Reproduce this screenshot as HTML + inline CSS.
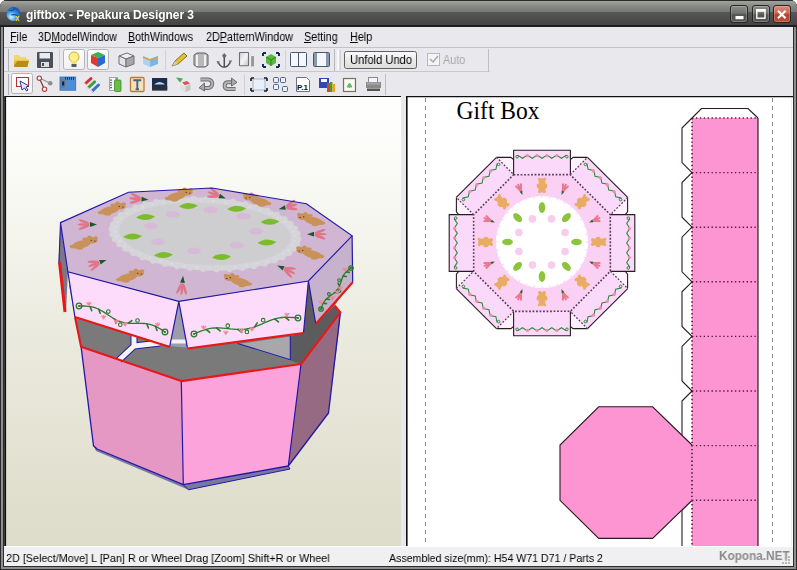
<!DOCTYPE html>
<html><head><meta charset="utf-8">
<style>
*{margin:0;padding:0;box-sizing:border-box}
html,body{width:797px;height:570px;overflow:hidden;background:#fff;font-family:"Liberation Sans",sans-serif}
.abs{position:absolute}
#frame{left:0;top:0;width:797px;height:570px;background:#3a3a3a;border-radius:7px 7px 0 0;box-shadow:inset 1px 0 0 #2a2a2a,inset -1px 0 0 #2a2a2a,inset 0 -1px 0 #2a2a2a}
#frin{left:1px;top:20px;width:795px;height:549px;border:2px solid #8e8e8e;border-top:none;box-shadow:inset 0 0 0 1px #2c2c2c}
#title{left:0;top:0;width:797px;height:27px;border-radius:7px 7px 0 0;background:linear-gradient(#2a2a2a 0px,#2a2a2a 1px,#a2a4a0 1px,#969894 3px,#848682 7px,#767874 12.5px,#575757 12.5px,#4e4e4e 18px,#444444 25px,#1e1e1e 25px,#1e1e1e 27px)}
#ttext{will-change:transform;padding-right:3px;left:26px;top:8px;color:#fff;font-weight:bold;font-size:12px;letter-spacing:-0.05px;white-space:nowrap}
.wb{top:5px;width:18px;height:18px;border:1px solid #262626;border-radius:3px;background:linear-gradient(#8c8e8a,#70726e 45%,#525252 55%,#5a5a5a);box-shadow:inset 0 0 0 1px rgba(255,255,255,.22)}
#menubar{left:4px;top:27px;width:789px;height:20px;background:#e9e8ec}
.mi{will-change:transform;padding-right:3px;top:3px;font-size:12px;color:#000;transform-origin:0 0;white-space:nowrap}
.u{text-decoration:underline}
#tb1{left:4px;top:47px;width:789px;height:25px;background:#e9e8ec;border-top:1px solid #c4c4c8}
#tb2{left:4px;top:72px;width:789px;height:24px;background:#e9e8ec}
#view3d{left:5px;top:96px;width:396px;height:450px;background:linear-gradient(#ffffff 0%,#f7f7f2 20%,#e9e8dc 55%,#dddcc9 100%);border-top:1px solid #1a1a1a}
#split{left:401px;top:96px;width:5px;height:450px;background:#e9e8ec}
#view2d{left:406px;top:96px;width:386px;height:450px;background:#fff;border-top:2px solid #111;border-left:2px solid #111}
#status{left:4px;top:546px;width:789px;height:20px;background:#f0f0f2;border-top:1px solid #fff}
.st{will-change:transform;padding-right:3px;top:551.5px;font-size:11.5px;color:#000;transform-origin:0 0;white-space:nowrap}
</style></head><body>
<div id="frame" class="abs"></div>
<div id="frin" class="abs"></div>
<div id="title" class="abs"></div>
<div id="ttext" class="abs">giftbox - Pepakura Designer 3</div>
<div class="abs wb" style="left:730px"></div>
<div class="abs wb" style="left:751.5px"></div>
<div class="abs wb" style="left:772.5px;background:linear-gradient(#dc8a7a,#cc6650 45%,#b8402a 55%,#c05038)"></div>
<svg class="abs" style="left:725px;top:0" width="72" height="27" viewBox="725 0 72 27"><rect x="735.5" y="16" width="8" height="3.2" fill="#fff"/><rect x="756.8" y="9.8" width="8.2" height="8.4" fill="none" stroke="#fff" stroke-width="1.4"/><rect x="756.2" y="9.2" width="9.4" height="2.6" fill="#fff"/><path d="M778 10.8 L785.6 18.2 M785.6 10.8 L778 18.2" stroke="#fff" stroke-width="2.2"/></svg>
<div id="menubar" class="abs"></div>
<div class="abs mi" style="left:10px;top:29.5px;transform:scaleX(.9)"><span class="u">F</span>ile</div>
<div class="abs mi" style="left:38px;top:29.5px;transform:scaleX(.87)">3D<span class="u">M</span>odelWindow</div>
<div class="abs mi" style="left:128px;top:29.5px;transform:scaleX(.885)"><span class="u">B</span>othWindows</div>
<div class="abs mi" style="left:206px;top:29.5px;transform:scaleX(.9)">2D<span class="u">P</span>atternWindow</div>
<div class="abs mi" style="left:304px;top:29.5px;transform:scaleX(.9)"><span class="u">S</span>etting</div>
<div class="abs mi" style="left:350px;top:29.5px;transform:scaleX(.9)"><span class="u">H</span>elp</div>
<div id="tb1" class="abs"></div>
<div id="tb2" class="abs"></div>
<svg class="abs" style="left:0;top:46px" width="500" height="51" viewBox="0 46 500 51">
<defs>
<linearGradient id="btnp" x1="0" y1="0" x2="0" y2="1"><stop offset="0" stop-color="#fdfdfd"/><stop offset="1" stop-color="#f1f1f1"/></linearGradient>
<linearGradient id="folder" x1="0" y1="0" x2="0" y2="1"><stop offset="0" stop-color="#f4d860"/><stop offset="1" stop-color="#c8901a"/></linearGradient>
<linearGradient id="gbtn" x1="0" y1="0" x2="0" y2="1"><stop offset="0" stop-color="#fafafa"/><stop offset="1" stop-color="#dcdcdc"/></linearGradient>
</defs>
<!-- toolbar band lines -->
<line x1="8.5" y1="49" x2="8.5" y2="71" stroke="#b0b0b4"/>
<line x1="4" y1="71.5" x2="490" y2="71.5" stroke="#c8c8cc"/>
<line x1="8.5" y1="74" x2="8.5" y2="95" stroke="#b0b0b4"/>
<line x1="488.5" y1="49" x2="488.5" y2="71" stroke="#c0c0c4"/>
<line x1="385.5" y1="74" x2="385.5" y2="95" stroke="#c0c0c4"/>
<!-- folder -->
<path d="M14 55 h5 l1.5 2 h6 v2 H14z" fill="#f0d870"/>
<path d="M14 59 h15 l-1.5 8 H14z" fill="url(#folder)"/>
<path d="M17 61 h12 l-2 6 H14z" fill="#b88a20"/>
<!-- save -->
<rect x="37" y="52" width="16" height="16" rx="1" fill="#4a4f58"/>
<rect x="39.5" y="53" width="10.5" height="5.5" fill="#e8ecf2"/>
<rect x="41" y="62" width="8" height="5" fill="#dcdcdc"/>
<rect x="42" y="63" width="2" height="3" fill="#4a4f58"/>
<line x1="59.5" y1="49" x2="59.5" y2="71" stroke="#d0d0d4"/>
<!-- pressed buttons -->
<rect x="63.5" y="49.5" width="21" height="20" rx="2" fill="url(#btnp)" stroke="#b4b4b8"/>
<rect x="87.5" y="49.5" width="21" height="20" rx="2" fill="url(#btnp)" stroke="#b4b4b8"/>
<!-- bulb -->
<circle cx="74" cy="57" r="5" fill="#fbf08a" stroke="#c8b040" stroke-width="1"/>
<rect x="71.5" y="61" width="5" height="4" fill="#f4e070"/>
<rect x="71.5" y="64" width="5" height="3" fill="#5a5a5a"/>
<!-- color cube -->
<path d="M91 55 l7-3 l7 3 l-7 3z" fill="#3cb04a"/>
<path d="M91 55 v8 l7 4 v-9z" fill="#e03a2a"/>
<path d="M105 55 v8 l-7 4 v-9z" fill="#2a6ad0"/>
<!-- gray cube -->
<path d="M119 56 l8-3 l7 3 l-8 3z" fill="#f0f0f0" stroke="#707070" stroke-width="1"/>
<path d="M119 56 v8 l7 3 v-8z" fill="#e4e4e4" stroke="#707070" stroke-width="1"/>
<path d="M134 56 v8 l-8 3 v-8z" fill="#a8a8a8" stroke="#707070" stroke-width="1"/>
<!-- blue cube -->
<path d="M143 56 l8-3 l7 3 l-8 3z" fill="#d8ecfa"/>
<path d="M143 56 v8 l7 3 v-8z" fill="#a8d4f2"/>
<path d="M158 56 v8 l-8 3 v-8z" fill="#78b8e8"/>
<path d="M143 57 l7 3 l8-3" fill="none" stroke="#e89a40" stroke-width="1.5"/>
<line x1="165.5" y1="50" x2="165.5" y2="70" stroke="#d0d0d4"/>
<!-- pencil -->
<path d="M172 66 l3-5 l9-8 l3 3 l-9 8z" fill="#e0c030" stroke="#8a7020" stroke-width="1"/>
<path d="M172 66 l3-5 l3 3z" fill="#c8c8c8"/>
<!-- cylinder -->
<path d="M194 55 l3-2 h8 l3 2 v10 l-3 2 h-8 l-3-2z" fill="#b8b8b8" stroke="#606060"/>
<path d="M197 55 v11 M205 55 v11" stroke="#f0f0f0" stroke-width="2"/>
<!-- anchor -->
<path d="M224.3 53 L226.6 55.8 L224.3 58.6 L222 55.8z" fill="#6a6a6a"/>
<path d="M224.3 57 V67 M218.5 63 Q221 67.5 224.3 67 Q227.5 67.5 230 62.5" fill="none" stroke="#505050" stroke-width="1.5"/>
<path d="M216.5 61 l3.5 0.5 l-2 3z M232 60.3 l-3.5 0.5 l2 3z" fill="#707070"/>
<!-- half rect -->
<defs><linearGradient id="hr" x1="0" y1="0" x2="1" y2="1"><stop offset="0" stop-color="#d0d0d0"/><stop offset="0.5" stop-color="#f4f4f4"/><stop offset="1" stop-color="#c4c4c4"/></linearGradient></defs>
<rect x="239.5" y="52.5" width="9" height="13.3" rx="0.5" fill="url(#hr)" stroke="#6e6e6e" stroke-width="1.1"/>
<rect x="251.2" y="56.1" width="2.7" height="10.3" fill="#929292"/>
<!-- green cube selection -->
<path d="M263 53 h3 M263 53 v3 M279 53 h-3 M279 53 v3 M263 67 h3 M263 67 v-3 M279 67 h-3 M279 67 v-3" stroke="#1a2a60" stroke-width="2"/>
<path d="M266 57 l5-3 l5 3 v6 l-5 3 l-5-3z" fill="#5ab840"/>
<path d="M266 57 l5 3 l5-3 M271 60 v6" stroke="#2c8020" fill="none"/>
<line x1="285.5" y1="50" x2="285.5" y2="70" stroke="#d0d0d4"/>
<!-- window icons -->
<rect x="290.5" y="52.5" width="16" height="14" rx="1" fill="#f4f8fc" stroke="#4a5670"/>
<line x1="298.5" y1="53" x2="298.5" y2="66" stroke="#4a5670"/>
<rect x="313.5" y="52.5" width="16" height="14" rx="1" fill="#f4f8fc" stroke="#4a5670"/>
<rect x="314" y="53" width="3" height="13" fill="#8898b0"/>
<rect x="326" y="53" width="3" height="13" fill="#8898b0"/>
<line x1="334.5" y1="49" x2="334.5" y2="71" stroke="#b8b8bc"/><rect x="337" y="50" width="3" height="20" fill="#f8f8fa"/><line x1="340" y1="50" x2="340" y2="70" stroke="#c0c0c4"/>
<!-- unfold undo button -->
<rect x="344.5" y="51.5" width="72" height="17" rx="2" fill="url(#gbtn)" stroke="#606060"/>
<!-- auto checkbox -->
<rect x="427.5" y="53.5" width="12" height="12" fill="#f4f4f4" stroke="#b8b8b8"/>
<path d="M430 59 l3 3 l5-6" fill="none" stroke="#a8a8a8" stroke-width="1.5"/>
<!-- toolbar 2 -->
<rect x="11.5" y="73.5" width="21" height="20" rx="2" fill="url(#btnp)" stroke="#b4b4b8"/>
<rect x="16.5" y="77.5" width="12" height="9" fill="#fff" stroke="#b03030"/>
<path d="M20 81 l9 5 l-3 1 l2 3 l-1.5 1 l-2-3 l-2.5 2z" fill="#dfe8f8" stroke="#2a3a80" stroke-width="1"/>
<!-- nodes -->
<path d="M39.3 78 L44.5 89.4" stroke="#6a3a3a" stroke-width="1.2"/>
<path d="M39.3 78 L50.2 83.2" stroke="#909090" stroke-width="1.2"/>
<circle cx="39.3" cy="78.2" r="2.2" fill="#f4f4f4" stroke="#b04040" stroke-width="1.1"/>
<circle cx="44.5" cy="89.2" r="2.2" fill="#f4f4f4" stroke="#b04040" stroke-width="1.1"/>
<circle cx="50.2" cy="83.3" r="2.3" fill="#8e8e8e"/>
<!-- blue zipper -->
<rect x="60" y="77" width="15.7" height="13.2" fill="#4e8ed6" stroke="#3a6aa8" stroke-width="0.8"/>
<path d="M65 78.5 h10" stroke="#1a2a50" stroke-width="2.4" stroke-dasharray="1 1"/>
<rect x="61" y="79" width="4.5" height="9" fill="#707a88"/>
<rect x="62.2" y="81.5" width="2" height="4" fill="#1a1a1a"/>
<!-- pencils -->
<path d="M85.5 83.5 L91 78.5 M88.5 87.5 L94.6 81.8 M92.3 90.8 L98.5 85" stroke-width="3" fill="none" stroke-linecap="round"/>
<path d="M85.5 83.5 L91 78.5" stroke="#d83030" stroke-width="3" stroke-linecap="round"/>
<path d="M88.5 87.5 L94.6 81.8" stroke="#3aa040" stroke-width="3" stroke-linecap="round"/>
<path d="M92.3 90.8 L98.5 85" stroke="#3a70d0" stroke-width="3" stroke-linecap="round"/>
<path d="M84 85 l1.5-1.5 M87 89 l1.5-1.5 M90.8 92.3 l1.5-1.5" stroke="#e8e0d8" stroke-width="2"/>
<!-- doc green -->
<rect x="109.5" y="77.5" width="8" height="13" fill="#f4f6fa" stroke="#a0a8b8"/>
<path d="M111 79.5 v10" stroke="#303840" stroke-width="1.4" stroke-dasharray="1.2 1.3"/>
<rect x="114.5" y="80" width="6.5" height="11.5" rx="1" fill="#6cbc48" stroke="#3a8a2a" stroke-width="0.8"/>
<rect x="115.5" y="78" width="2" height="3" fill="#5aa040"/>
<!-- T -->
<rect x="130.5" y="77.5" width="13.5" height="14" rx="1" fill="#f6e2b8" stroke="#c07838" stroke-width="1.3"/>
<path d="M133.3 80.3 h8 M137.3 80.3 v9 M135.6 89.3 h3.4" stroke="#4a6488" stroke-width="1.9"/>
<!-- dark blue -->
<rect x="152" y="78" width="15.2" height="12.4" fill="#1c2c4c"/>
<path d="M154 84.5 q5.6-5 11.2 0z" fill="#b8dcf4"/>
<rect x="152" y="86" width="15.2" height="4.4" fill="#2a3040"/>
<!-- red green cube -->
<path d="M180.5 84 l5-2.2 l5 2.2 l-5 2.2z" fill="#f4f0f0"/>
<path d="M180.5 84 v6 l5 2.2 v-6z" fill="#e2e2e2"/>
<path d="M190.5 84 v6 l-5 2.2 v-6z" fill="#c4c4c4"/>
<path d="M176 77.5 l7 1 l-3 4z" fill="#40b050"/>
<path d="M182 82.5 l5 -1.5 l3 2.5 l-5 1.8z" fill="#e05050"/>
<!-- undo redo -->
<path d="M200.5 79.5 H208 A4.2 4.2 0 0 1 208 88 H203.5" fill="none" stroke="#6e6e6e" stroke-width="4"/>
<path d="M200.5 79.5 H208 A4.2 4.2 0 0 1 208 88 H203.5" fill="none" stroke="#b4b4b4" stroke-width="2"/>
<path d="M204.5 83 L199 87.8 L204.5 91z" fill="#a8a8a8" stroke="#6e6e6e" stroke-width="1"/>
<path d="M235.5 89 H227.5 A3.4 3.4 0 0 1 227.5 82.3 H232" fill="none" stroke="#6e6e6e" stroke-width="4"/>
<path d="M235.5 89 H227.5 A3.4 3.4 0 0 1 227.5 82.3 H232" fill="none" stroke="#b4b4b4" stroke-width="2"/>
<path d="M231.5 78 L237 82.3 L231.5 86z" fill="#a8a8a8" stroke="#6e6e6e" stroke-width="1"/>
<line x1="244.5" y1="74" x2="244.5" y2="95" stroke="#d0d0d4"/>
<!-- select square -->
<rect x="253" y="79" width="12" height="11" fill="#e8f0fa" stroke="#a8b8d0"/>
<path d="M251 78 h3 M251 78 v3 M267 78 h-3 M267 78 v3 M251 91 h3 M251 91 v-3 M267 91 h-3 M267 91 v-3" stroke="#1a1a30" stroke-width="1.6"/>
<!-- 4 squares -->
<rect x="273.5" y="77.5" width="5" height="5" rx="1" fill="#e8f0f8" stroke="#506080"/>
<rect x="280.5" y="77.5" width="5" height="5" rx="1" fill="#e8f0f8" stroke="#506080"/>
<rect x="273.5" y="84.5" width="5" height="5" rx="1" fill="#e8f0f8" stroke="#506080"/>
<rect x="282.5" y="86.5" width="5" height="5" rx="1" fill="#e8f0f8" stroke="#506080"/>
<!-- P.1 -->
<path d="M296.5 77.5 h10 l3 3 v11 h-13z" fill="#fff" stroke="#707080"/>
<text x="297" y="90" font-family="Liberation Sans" font-weight="bold" font-size="8" fill="#111">P.1</text>
<!-- color blocks -->
<rect x="319" y="78" width="10" height="10" fill="#2a4ab0"/>
<rect x="321" y="79" width="6" height="3" fill="#fff"/>
<rect x="327" y="83" width="3" height="9" fill="#e04020"/>
<rect x="330" y="82" width="2.5" height="10" fill="#40a040"/>
<rect x="332.5" y="84" width="2.5" height="8" fill="#f0a020"/>
<!-- doc icon -->
<rect x="343.5" y="78.5" width="12" height="13" fill="#f4f4ec" stroke="#7a7260" stroke-width="1.2"/>
<rect x="345" y="80" width="9" height="10" fill="#fafaf4"/>
<path d="M347 87 l2.5-4 l2.5 4z M349.5 85 v3" fill="#60c060" stroke="#60c060"/>
<!-- printer -->
<rect x="368.5" y="77.5" width="9" height="6" fill="#f4f6fa" stroke="#8a8a8a"/>
<path d="M366 82 h15 v6 h-15z" fill="#8a8a8a"/>
<rect x="367" y="82.5" width="13" height="2" fill="#a8a8a8"/>
<rect x="367" y="88.5" width="13" height="2.5" fill="#555"/>
</svg>
<div class="abs" style="will-change:transform;padding-right:3px;left:350px;top:53px;font-size:12px;transform:scaleX(.93);transform-origin:0 0;white-space:nowrap;color:#000">Unfold Undo</div>
<div class="abs" style="will-change:transform;padding-right:3px;left:443px;top:53px;font-size:12px;transform:scaleX(.9);transform-origin:0 0;white-space:nowrap;color:#a8a8a8">Auto</div>

<div id="view3d" class="abs"></div>
<!--V3D-->
<svg class="abs" style="left:5px;top:96px" width="396" height="450" viewBox="5 96 396 450">
<defs><linearGradient id="bg3" x1="0" y1="0" x2="0" y2="1"><stop offset="0" stop-color="#ffffff"/><stop offset="0.22" stop-color="#f8f8f3"/><stop offset="0.55" stop-color="#eae9dd"/><stop offset="1" stop-color="#dddcca"/></linearGradient></defs>
<rect x="5" y="97" width="396" height="449" fill="url(#bg3)"/><line x1="5" y1="96.5" x2="401" y2="96.5" stroke="#101010" stroke-width="1.2"/>
<polygon points="93.5,445.7 97,449 183.3,484.7 288.3,466 290,469 188.4,489.8 96,451" fill="#7a78a0" stroke="none" stroke-width="1" />
<polygon points="81.1,346.8 181.3,381.1 183.3,484.7 97,449 93.5,445.7" fill="#e598c4" stroke="none" stroke-width="1" />
<polygon points="181.3,381.1 301,364 288.3,466 183.3,484.7" fill="#fca3dc" stroke="none" stroke-width="1" />
<polygon points="301,364 340.4,312.4 339,330 328.5,413 288.3,466" fill="#976a84" stroke="none" stroke-width="1" />
<polyline points="81.1,346.8 93.5,445.7 97,449 183.3,484.7 288.3,466 328.5,413 340.4,312.4" fill="none" stroke="#2218a8" stroke-width="1.3" stroke-linejoin="round" />
<polyline points="181.3,381.1 183.3,484.7" fill="none" stroke="#2218a8" stroke-width="1.2" stroke-linejoin="round" />
<polyline points="301,364 288.3,466" fill="none" stroke="#2218a8" stroke-width="1.2" stroke-linejoin="round" />
<polyline points="183.3,484.7 188.4,489.8 290,469 288.3,466" fill="none" stroke="#2218a8" stroke-width="1" stroke-linejoin="round" />
<polygon points="69,285 75,317 81.1,346.8 181.3,381.1 301,364 340.4,312.4 334.8,305.6 352,280 308,281" fill="#7b7a7b" stroke="none" stroke-width="1" />
<polygon points="238,344 290.5,360.4 290.5,336.6" fill="#a8a8ac" stroke="none" stroke-width="1" />
<polygon points="290.5,336.6 303.5,332.7 308.4,281 315.8,324 334.8,305.6 340.4,312.4 301,364 290.5,360.4" fill="#5c5c5e" stroke="none" stroke-width="1" />
<polyline points="237.6,343.5 290.3,359.7 290.3,336" fill="none" stroke="#2218a8" stroke-width="1.1" stroke-linejoin="round" />
<polyline points="119,360 134,346 134,336" fill="none" stroke="#2218a8" stroke-width="7" stroke-linejoin="round" />
<polyline points="134,346 160,343" fill="none" stroke="#2218a8" stroke-width="7" stroke-linejoin="round" />
<polyline points="119,360 134,346 134,336" fill="none" stroke="#f4f4f6" stroke-width="5" stroke-linejoin="round" />
<polyline points="134,346 160,343" fill="none" stroke="#f4f4f6" stroke-width="5" stroke-linejoin="round" />
<polyline points="75,317 81.1,346.8 181.3,381.1 301,364 340.4,312.4 334.8,305.6" fill="none" stroke="#e81818" stroke-width="2.1" stroke-linejoin="round" />
<polygon points="60.5,222.6 67.9,271.8 66,313 58.5,262" fill="#7c7688" stroke="none" stroke-width="1" />
<polyline points="60.5,222.6 59,262" fill="none" stroke="#2218a8" stroke-width="1.1" stroke-linejoin="round" />
<polyline points="59.5,262 65,312" fill="none" stroke="#e81818" stroke-width="3" stroke-linejoin="round" />
<polygon points="67.9,271.8 178.8,301.4 169.8,346 74.9,317" fill="#fcdcfa" stroke="none" stroke-width="1" />
<polygon points="178.8,301.4 169.8,346 187.4,347.7" fill="#9c9cae" stroke="none" stroke-width="1" />
<polygon points="171,339.5 186.5,339.5 187,343.5 170.5,343.5" fill="#f0f0ff" stroke="none" stroke-width="1" />
<polygon points="178.8,301.4 308.4,281 303.5,332.7 187.6,347.9" fill="#fcdcfa" stroke="none" stroke-width="1" />
<polygon points="308.4,281 352.1,235.8 352.7,282.3 315.8,324" fill="#c6b2cc" stroke="none" stroke-width="1" />
<polyline points="67.9,271.8 74.9,317" fill="none" stroke="#2218a8" stroke-width="1.2" stroke-linejoin="round" />
<polyline points="169.8,346 178.8,301.4 187.4,347.7" fill="none" stroke="#2218a8" stroke-width="1.2" stroke-linejoin="round" />
<polyline points="308.4,281 303.5,332.7" fill="none" stroke="#2218a8" stroke-width="1.2" stroke-linejoin="round" />
<polyline points="308.4,281 315.8,324" fill="none" stroke="#2218a8" stroke-width="1.2" stroke-linejoin="round" />
<polyline points="352.1,235.8 352.7,282.3" fill="none" stroke="#2218a8" stroke-width="1.2" stroke-linejoin="round" />
<polyline points="74.9,317 169.8,347" fill="none" stroke="#e81818" stroke-width="2.1" stroke-linejoin="round" />
<polyline points="187.6,348.5 303.5,333" fill="none" stroke="#e81818" stroke-width="2.1" stroke-linejoin="round" />
<polyline points="315.8,324 352.7,282.3" fill="none" stroke="#e81818" stroke-width="2.1" stroke-linejoin="round" />
<path d="M79.0 306.0 L81.4 306.0 L83.7 306.0 L86.0 306.1 L88.3 306.3 L90.6 306.6 L92.8 307.1 L94.9 307.7 L97.0 308.5 L99.1 309.4 L101.1 310.5 L103.1 311.6 L105.1 312.9 L107.0 314.2 L109.0 315.5 L110.9 316.8 L112.9 318.1 L114.9 319.2 L116.9 320.3 L119.0 321.1 L121.1 321.9 L123.3 322.4 L125.5 322.9 L127.8 323.1 L130.1 323.3 L132.4 323.3 L134.8 323.3 L137.1 323.3 L139.5 323.3 L141.8 323.3 L144.1 323.5 L146.4 323.7 L148.6 324.1 L150.8 324.6 L153.0 325.3 L155.1 326.1 L157.1 327.1 L159.1 328.2 L161.1 329.4 L163.1 330.7 L165.0 332.0 " fill="none" stroke="#2c7a2c" stroke-width="1.3"/>
<circle cx="79.0" cy="306.0" r="2.8" fill="none" stroke="#2c7a2c" stroke-width="1.3"/><circle cx="79.0" cy="306.0" r="1.1" fill="#2c7a2c"/>
<circle cx="165.0" cy="332.0" r="2.8" fill="none" stroke="#2c7a2c" stroke-width="1.3"/><circle cx="165.0" cy="332.0" r="1.1" fill="#2c7a2c"/>
<circle cx="108.3" cy="311.6" r="1.8" fill="none" stroke="#2c7a2c" stroke-width="1.1"/>
<circle cx="120.3" cy="324.7" r="1.8" fill="none" stroke="#2c7a2c" stroke-width="1.1"/>
<circle cx="137.5" cy="320.5" r="1.8" fill="none" stroke="#2c7a2c" stroke-width="1.1"/>
<path d="M90.1 306.5 L91.7 310.7" stroke="#2c7a2c" stroke-width="1.6" stroke-linecap="round"/>
<path d="M98.7 309.2 L100.2 313.3" stroke="#2c7a2c" stroke-width="1.6" stroke-linecap="round"/>
<path d="M114.5 319.0 L116.1 323.1" stroke="#2c7a2c" stroke-width="1.6" stroke-linecap="round"/>
<path d="M128.2 323.2 L131.8 320.6" stroke="#2c7a2c" stroke-width="1.6" stroke-linecap="round"/>
<path d="M146.8 323.8 L148.4 327.9" stroke="#2c7a2c" stroke-width="1.6" stroke-linecap="round"/>
<path d="M155.5 326.3 L157.0 330.4" stroke="#2c7a2c" stroke-width="1.6" stroke-linecap="round"/>
<g transform="translate(88.9 304.3)"><path d="M-2.2 -2 L0 1 L2.2 -2 M0 -2.5 L0 1" stroke="#f0889a" stroke-width="1.3" fill="none"/></g>
<g transform="translate(116.4 322.0)"><path d="M-2.2 -2 L0 1 L2.2 -2 M0 -2.5 L0 1" stroke="#f0889a" stroke-width="1.3" fill="none"/></g>
<g transform="translate(125.0 324.6)"><path d="M-2.2 -2 L0 1 L2.2 -2 M0 -2.5 L0 1" stroke="#f0889a" stroke-width="1.3" fill="none"/></g>
<g transform="translate(157.7 325.1)"><path d="M-2.2 -2 L0 1 L2.2 -2 M0 -2.5 L0 1" stroke="#f0889a" stroke-width="1.3" fill="none"/></g>
<g transform="translate(103.6 317.6)"><path d="M-2.2 -2 L0 1 L2.2 -2 M0 -2.5 L0 1" stroke="#f0889a" stroke-width="1.3" fill="none"/></g>
<path d="M194.0 334.0 L196.5 332.9 L199.0 331.9 L201.5 330.9 L204.0 330.0 L206.6 329.3 L209.1 328.7 L211.7 328.2 L214.4 328.0 L217.0 327.9 L219.7 327.9 L222.4 328.1 L225.1 328.3 L227.8 328.6 L230.5 328.9 L233.2 329.1 L235.9 329.3 L238.5 329.5 L241.2 329.4 L243.8 329.3 L246.5 329.0 L249.0 328.5 L251.6 327.8 L254.1 327.1 L256.7 326.1 L259.2 325.1 L261.7 324.1 L264.2 323.0 L266.7 321.9 L269.2 320.9 L271.7 319.9 L274.2 319.1 L276.8 318.4 L279.3 317.8 L281.9 317.5 L284.6 317.3 L287.2 317.2 L289.9 317.3 L292.6 317.5 L295.3 317.7 L298.0 318.0 " fill="none" stroke="#2c7a2c" stroke-width="1.3"/>
<circle cx="194.0" cy="334.0" r="2.8" fill="none" stroke="#2c7a2c" stroke-width="1.3"/><circle cx="194.0" cy="334.0" r="1.1" fill="#2c7a2c"/>
<circle cx="298.0" cy="318.0" r="2.8" fill="none" stroke="#2c7a2c" stroke-width="1.3"/><circle cx="298.0" cy="318.0" r="1.1" fill="#2c7a2c"/>
<circle cx="227.8" cy="325.7" r="1.8" fill="none" stroke="#2c7a2c" stroke-width="1.1"/>
<circle cx="246.9" cy="331.9" r="1.8" fill="none" stroke="#2c7a2c" stroke-width="1.1"/>
<circle cx="263.2" cy="320.2" r="1.8" fill="none" stroke="#2c7a2c" stroke-width="1.1"/>
<path d="M206.1 329.4 L209.7 332.4" stroke="#2c7a2c" stroke-width="1.6" stroke-linecap="round"/>
<path d="M216.5 327.9 L220.1 330.9" stroke="#2c7a2c" stroke-width="1.6" stroke-linecap="round"/>
<path d="M238.0 329.4 L241.7 332.4" stroke="#2c7a2c" stroke-width="1.6" stroke-linecap="round"/>
<path d="M254.7 326.9 L257.2 322.9" stroke="#2c7a2c" stroke-width="1.6" stroke-linecap="round"/>
<path d="M274.7 318.9 L278.4 321.9" stroke="#2c7a2c" stroke-width="1.6" stroke-linecap="round"/>
<path d="M285.1 317.2 L288.8 320.2" stroke="#2c7a2c" stroke-width="1.6" stroke-linecap="round"/>
<g transform="translate(203.7 328.0)"><path d="M-2.2 -2 L0 1 L2.2 -2 M0 -2.5 L0 1" stroke="#f0889a" stroke-width="1.3" fill="none"/></g>
<g transform="translate(241.5 331.2)"><path d="M-2.2 -2 L0 1 L2.2 -2 M0 -2.5 L0 1" stroke="#f0889a" stroke-width="1.3" fill="none"/></g>
<g transform="translate(251.9 329.6)"><path d="M-2.2 -2 L0 1 L2.2 -2 M0 -2.5 L0 1" stroke="#f0889a" stroke-width="1.3" fill="none"/></g>
<g transform="translate(286.9 315.2)"><path d="M-2.2 -2 L0 1 L2.2 -2 M0 -2.5 L0 1" stroke="#f0889a" stroke-width="1.3" fill="none"/></g>
<g transform="translate(225.8 333.2)"><path d="M-2.2 -2 L0 1 L2.2 -2 M0 -2.5 L0 1" stroke="#f0889a" stroke-width="1.3" fill="none"/></g>
<path d="M321.0 309.0 L321.4 307.7 L321.9 306.5 L322.3 305.3 L322.9 304.1 L323.4 302.9 L324.1 301.8 L324.8 300.8 L325.6 299.8 L326.5 298.9 L327.5 298.0 L328.5 297.2 L329.6 296.4 L330.6 295.6 L331.7 294.8 L332.8 294.0 L333.8 293.2 L334.8 292.4 L335.8 291.5 L336.6 290.5 L337.4 289.5 L338.1 288.5 L338.8 287.4 L339.3 286.2 L339.8 285.0 L340.3 283.8 L340.7 282.5 L341.1 281.2 L341.6 280.0 L342.0 278.7 L342.5 277.5 L343.0 276.3 L343.6 275.2 L344.3 274.1 L345.1 273.1 L345.9 272.2 L346.9 271.3 L347.8 270.4 L348.9 269.6 L349.9 268.8 L351.0 268.0 " fill="none" stroke="#2c7a2c" stroke-width="1.3"/>
<circle cx="321.0" cy="309.0" r="2.2" fill="none" stroke="#2c7a2c" stroke-width="1.3"/><circle cx="321.0" cy="309.0" r="1.1" fill="#2c7a2c"/>
<circle cx="351.0" cy="268.0" r="2.2" fill="none" stroke="#2c7a2c" stroke-width="1.3"/><circle cx="351.0" cy="268.0" r="1.1" fill="#2c7a2c"/>
<circle cx="328.9" cy="294.0" r="1.4" fill="none" stroke="#2c7a2c" stroke-width="1.1"/>
<circle cx="339.4" cy="291.0" r="1.4" fill="none" stroke="#2c7a2c" stroke-width="1.1"/>
<circle cx="339.1" cy="280.1" r="1.4" fill="none" stroke="#2c7a2c" stroke-width="1.1"/>
<path d="M323.3 303.1 L326.5 303.6" stroke="#2c7a2c" stroke-width="1.6" stroke-linecap="round"/>
<path d="M326.4 299.1 L329.5 299.5" stroke="#2c7a2c" stroke-width="1.6" stroke-linecap="round"/>
<path d="M334.6 292.5 L337.8 293.0" stroke="#2c7a2c" stroke-width="1.6" stroke-linecap="round"/>
<path d="M339.4 286.0 L338.1 283.1" stroke="#2c7a2c" stroke-width="1.6" stroke-linecap="round"/>
<path d="M343.2 276.1 L346.3 276.5" stroke="#2c7a2c" stroke-width="1.6" stroke-linecap="round"/>
<path d="M346.1 272.0 L349.3 272.4" stroke="#2c7a2c" stroke-width="1.6" stroke-linecap="round"/>
<g transform="translate(321.1 302.8)"><path d="M-2.2 -2 L0 1 L2.2 -2 M0 -2.5 L0 1" stroke="#f0889a" stroke-width="1.3" fill="none"/></g>
<g transform="translate(337.4 292.7)"><path d="M-2.2 -2 L0 1 L2.2 -2 M0 -2.5 L0 1" stroke="#f0889a" stroke-width="1.3" fill="none"/></g>
<g transform="translate(340.4 288.6)"><path d="M-2.2 -2 L0 1 L2.2 -2 M0 -2.5 L0 1" stroke="#f0889a" stroke-width="1.3" fill="none"/></g>
<g transform="translate(345.1 270.0)"><path d="M-2.2 -2 L0 1 L2.2 -2 M0 -2.5 L0 1" stroke="#f0889a" stroke-width="1.3" fill="none"/></g>
<g transform="translate(332.6 298.6)"><path d="M-2.2 -2 L0 1 L2.2 -2 M0 -2.5 L0 1" stroke="#f0889a" stroke-width="1.3" fill="none"/></g>
<polygon points="60.5,222.6 128.5,192.3 212,188 306.4,203.7 352.1,235.8 308.4,281 178.8,301.4 67.9,271.8" fill="#d1b6d3" stroke="none" stroke-width="1" />
<g transform="rotate(3 205 234)">
<ellipse cx="205" cy="234" rx="95" ry="36.5" fill="#d5d4d8"/>
<circle cx="298.5" cy="234.0" r="3" fill="#d5d4d8"/>
<circle cx="297.5" cy="239.0" r="3" fill="#d5d4d8"/>
<circle cx="294.7" cy="243.9" r="3" fill="#d5d4d8"/>
<circle cx="290.1" cy="248.5" r="3" fill="#d5d4d8"/>
<circle cx="283.7" cy="252.9" r="3" fill="#d5d4d8"/>
<circle cx="275.7" cy="256.9" r="3" fill="#d5d4d8"/>
<circle cx="266.2" cy="260.5" r="3" fill="#d5d4d8"/>
<circle cx="255.5" cy="263.4" r="3" fill="#d5d4d8"/>
<circle cx="243.8" cy="265.8" r="3" fill="#d5d4d8"/>
<circle cx="231.3" cy="267.6" r="3" fill="#d5d4d8"/>
<circle cx="218.3" cy="268.6" r="3" fill="#d5d4d8"/>
<circle cx="205.0" cy="269.0" r="3" fill="#d5d4d8"/>
<circle cx="191.7" cy="268.6" r="3" fill="#d5d4d8"/>
<circle cx="178.7" cy="267.6" r="3" fill="#d5d4d8"/>
<circle cx="166.2" cy="265.8" r="3" fill="#d5d4d8"/>
<circle cx="154.5" cy="263.4" r="3" fill="#d5d4d8"/>
<circle cx="143.8" cy="260.5" r="3" fill="#d5d4d8"/>
<circle cx="134.3" cy="256.9" r="3" fill="#d5d4d8"/>
<circle cx="126.3" cy="252.9" r="3" fill="#d5d4d8"/>
<circle cx="119.9" cy="248.5" r="3" fill="#d5d4d8"/>
<circle cx="115.3" cy="243.9" r="3" fill="#d5d4d8"/>
<circle cx="112.5" cy="239.0" r="3" fill="#d5d4d8"/>
<circle cx="111.5" cy="234.0" r="3" fill="#d5d4d8"/>
<circle cx="112.5" cy="229.0" r="3" fill="#d5d4d8"/>
<circle cx="115.3" cy="224.1" r="3" fill="#d5d4d8"/>
<circle cx="119.9" cy="219.5" r="3" fill="#d5d4d8"/>
<circle cx="126.3" cy="215.1" r="3" fill="#d5d4d8"/>
<circle cx="134.3" cy="211.1" r="3" fill="#d5d4d8"/>
<circle cx="143.8" cy="207.5" r="3" fill="#d5d4d8"/>
<circle cx="154.5" cy="204.6" r="3" fill="#d5d4d8"/>
<circle cx="166.2" cy="202.2" r="3" fill="#d5d4d8"/>
<circle cx="178.7" cy="200.4" r="3" fill="#d5d4d8"/>
<circle cx="191.7" cy="199.4" r="3" fill="#d5d4d8"/>
<circle cx="205.0" cy="199.0" r="3" fill="#d5d4d8"/>
<circle cx="218.3" cy="199.4" r="3" fill="#d5d4d8"/>
<circle cx="231.3" cy="200.4" r="3" fill="#d5d4d8"/>
<circle cx="243.8" cy="202.2" r="3" fill="#d5d4d8"/>
<circle cx="255.5" cy="204.6" r="3" fill="#d5d4d8"/>
<circle cx="266.2" cy="207.5" r="3" fill="#d5d4d8"/>
<circle cx="275.7" cy="211.1" r="3" fill="#d5d4d8"/>
<circle cx="283.7" cy="215.1" r="3" fill="#d5d4d8"/>
<circle cx="290.1" cy="219.5" r="3" fill="#d5d4d8"/>
<circle cx="294.7" cy="224.1" r="3" fill="#d5d4d8"/>
<circle cx="297.5" cy="229.0" r="3" fill="#d5d4d8"/>
<circle cx="294.8" cy="236.4" r="1.2" fill="#dcdbe0"/>
<circle cx="292.9" cy="241.1" r="1.2" fill="#dcdbe0"/>
<circle cx="289.3" cy="245.7" r="1.2" fill="#dcdbe0"/>
<circle cx="284.0" cy="250.1" r="1.2" fill="#dcdbe0"/>
<circle cx="277.0" cy="254.1" r="1.2" fill="#dcdbe0"/>
<circle cx="268.6" cy="257.7" r="1.2" fill="#dcdbe0"/>
<circle cx="258.9" cy="260.8" r="1.2" fill="#dcdbe0"/>
<circle cx="248.1" cy="263.4" r="1.2" fill="#dcdbe0"/>
<circle cx="236.5" cy="265.4" r="1.2" fill="#dcdbe0"/>
<circle cx="224.1" cy="266.7" r="1.2" fill="#dcdbe0"/>
<circle cx="211.4" cy="267.4" r="1.2" fill="#dcdbe0"/>
<circle cx="198.6" cy="267.4" r="1.2" fill="#dcdbe0"/>
<circle cx="185.9" cy="266.7" r="1.2" fill="#dcdbe0"/>
<circle cx="173.5" cy="265.4" r="1.2" fill="#dcdbe0"/>
<circle cx="161.9" cy="263.4" r="1.2" fill="#dcdbe0"/>
<circle cx="151.1" cy="260.8" r="1.2" fill="#dcdbe0"/>
<circle cx="141.4" cy="257.7" r="1.2" fill="#dcdbe0"/>
<circle cx="133.0" cy="254.1" r="1.2" fill="#dcdbe0"/>
<circle cx="126.0" cy="250.1" r="1.2" fill="#dcdbe0"/>
<circle cx="120.7" cy="245.7" r="1.2" fill="#dcdbe0"/>
<circle cx="117.1" cy="241.1" r="1.2" fill="#dcdbe0"/>
<circle cx="115.2" cy="236.4" r="1.2" fill="#dcdbe0"/>
<circle cx="115.2" cy="231.6" r="1.2" fill="#dcdbe0"/>
<circle cx="117.1" cy="226.9" r="1.2" fill="#dcdbe0"/>
<circle cx="120.7" cy="222.3" r="1.2" fill="#dcdbe0"/>
<circle cx="126.0" cy="217.9" r="1.2" fill="#dcdbe0"/>
<circle cx="133.0" cy="213.9" r="1.2" fill="#dcdbe0"/>
<circle cx="141.4" cy="210.3" r="1.2" fill="#dcdbe0"/>
<circle cx="151.1" cy="207.2" r="1.2" fill="#dcdbe0"/>
<circle cx="161.9" cy="204.6" r="1.2" fill="#dcdbe0"/>
<circle cx="173.5" cy="202.6" r="1.2" fill="#dcdbe0"/>
<circle cx="185.9" cy="201.3" r="1.2" fill="#dcdbe0"/>
<circle cx="198.6" cy="200.6" r="1.2" fill="#dcdbe0"/>
<circle cx="211.4" cy="200.6" r="1.2" fill="#dcdbe0"/>
<circle cx="224.1" cy="201.3" r="1.2" fill="#dcdbe0"/>
<circle cx="236.5" cy="202.6" r="1.2" fill="#dcdbe0"/>
<circle cx="248.1" cy="204.6" r="1.2" fill="#dcdbe0"/>
<circle cx="258.9" cy="207.2" r="1.2" fill="#dcdbe0"/>
<circle cx="268.6" cy="210.3" r="1.2" fill="#dcdbe0"/>
<circle cx="277.0" cy="213.9" r="1.2" fill="#dcdbe0"/>
<circle cx="284.0" cy="217.9" r="1.2" fill="#dcdbe0"/>
<circle cx="289.3" cy="222.3" r="1.2" fill="#dcdbe0"/>
<circle cx="292.9" cy="226.9" r="1.2" fill="#dcdbe0"/>
<circle cx="294.8" cy="231.6" r="1.2" fill="#dcdbe0"/>
<ellipse cx="205" cy="234" rx="86" ry="31" fill="#cecdd0"/>
</g>
<path d="M178.9 206.5 Q187.4 200 197.9 205.5 Q189.4 212 178.9 206.5z" fill="#7cbc2c"/>
<path d="M227.2 209.3 Q235.7 202.8 246.2 208.3 Q237.7 214.8 227.2 209.3z" fill="#7cbc2c"/>
<path d="M136.1 217.5 Q144.6 211 155.1 216.5 Q146.6 223 136.1 217.5z" fill="#7cbc2c"/>
<path d="M260.5 222.3 Q269 215.8 279.5 221.3 Q271 227.8 260.5 222.3z" fill="#7cbc2c"/>
<path d="M123.1 236.9 Q131.6 230.4 142.1 235.9 Q133.6 242.4 123.1 236.9z" fill="#7cbc2c"/>
<path d="M257.5 243.0 Q266 236.5 276.5 242.0 Q268 248.5 257.5 243.0z" fill="#7cbc2c"/>
<path d="M154.0 255.5 Q162.5 249 173.0 254.5 Q164.5 261 154.0 255.5z" fill="#7cbc2c"/>
<path d="M212.0 257.4 Q220.5 250.89999999999998 231.0 256.4 Q222.5 262.9 212.0 257.4z" fill="#7cbc2c"/>
<ellipse cx="210.5" cy="210" rx="7" ry="3.3" fill="#d6bad8"/>
<ellipse cx="173" cy="214.3" rx="7" ry="3.3" fill="#d6bad8"/>
<ellipse cx="243.6" cy="216.2" rx="7" ry="3.3" fill="#d6bad8"/>
<ellipse cx="151" cy="226" rx="7" ry="3.3" fill="#d6bad8"/>
<ellipse cx="256" cy="231.4" rx="7" ry="3.3" fill="#d6bad8"/>
<ellipse cx="158" cy="242" rx="7" ry="3.3" fill="#d6bad8"/>
<ellipse cx="236.7" cy="245.2" rx="7" ry="3.3" fill="#d6bad8"/>
<ellipse cx="194" cy="250.8" rx="7" ry="3.3" fill="#d6bad8"/>
<g transform="translate(113 209) scale(0.9 0.68)" fill="#c8925a"><ellipse cx="-4" cy="2" rx="11" ry="5.5" transform="rotate(-18 -4 2)"/><ellipse cx="8" cy="-4" rx="6" ry="4.8"/><circle cx="5" cy="-8.5" r="2.4"/><circle cx="12" cy="-7.5" r="2.4"/><ellipse cx="1" cy="-6" rx="4" ry="2"/><ellipse cx="-13" cy="5" rx="4" ry="2.6"/><ellipse cx="-6" cy="7.5" rx="4" ry="2.4"/><circle cx="7" cy="-4" r="0.8" fill="#4a2a10"/><circle cx="11" cy="-3" r="0.8" fill="#4a2a10"/></g>
<g transform="translate(180 195) scale(0.9 0.68)" fill="#c8925a"><ellipse cx="-4" cy="2" rx="11" ry="5.5" transform="rotate(-18 -4 2)"/><ellipse cx="8" cy="-4" rx="6" ry="4.8"/><circle cx="5" cy="-8.5" r="2.4"/><circle cx="12" cy="-7.5" r="2.4"/><ellipse cx="1" cy="-6" rx="4" ry="2"/><ellipse cx="-13" cy="5" rx="4" ry="2.6"/><ellipse cx="-6" cy="7.5" rx="4" ry="2.4"/><circle cx="7" cy="-4" r="0.8" fill="#4a2a10"/><circle cx="11" cy="-3" r="0.8" fill="#4a2a10"/></g>
<g transform="translate(256 200) scale(-0.9 0.68)" fill="#c8925a"><ellipse cx="-4" cy="2" rx="11" ry="5.5" transform="rotate(-18 -4 2)"/><ellipse cx="8" cy="-4" rx="6" ry="4.8"/><circle cx="5" cy="-8.5" r="2.4"/><circle cx="12" cy="-7.5" r="2.4"/><ellipse cx="1" cy="-6" rx="4" ry="2"/><ellipse cx="-13" cy="5" rx="4" ry="2.6"/><ellipse cx="-6" cy="7.5" rx="4" ry="2.4"/><circle cx="7" cy="-4" r="0.8" fill="#4a2a10"/><circle cx="11" cy="-3" r="0.8" fill="#4a2a10"/></g>
<g transform="translate(310 219.5) scale(-0.9 0.68)" fill="#c8925a"><ellipse cx="-4" cy="2" rx="11" ry="5.5" transform="rotate(-18 -4 2)"/><ellipse cx="8" cy="-4" rx="6" ry="4.8"/><circle cx="5" cy="-8.5" r="2.4"/><circle cx="12" cy="-7.5" r="2.4"/><ellipse cx="1" cy="-6" rx="4" ry="2"/><ellipse cx="-13" cy="5" rx="4" ry="2.6"/><ellipse cx="-6" cy="7.5" rx="4" ry="2.4"/><circle cx="7" cy="-4" r="0.8" fill="#4a2a10"/><circle cx="11" cy="-3" r="0.8" fill="#4a2a10"/></g>
<g transform="translate(309 253) scale(-0.9 0.68)" fill="#c8925a"><ellipse cx="-4" cy="2" rx="11" ry="5.5" transform="rotate(-18 -4 2)"/><ellipse cx="8" cy="-4" rx="6" ry="4.8"/><circle cx="5" cy="-8.5" r="2.4"/><circle cx="12" cy="-7.5" r="2.4"/><ellipse cx="1" cy="-6" rx="4" ry="2"/><ellipse cx="-13" cy="5" rx="4" ry="2.6"/><ellipse cx="-6" cy="7.5" rx="4" ry="2.4"/><circle cx="7" cy="-4" r="0.8" fill="#4a2a10"/><circle cx="11" cy="-3" r="0.8" fill="#4a2a10"/></g>
<g transform="translate(236.7 280.5) scale(-0.9 0.68)" fill="#c8925a"><ellipse cx="-4" cy="2" rx="11" ry="5.5" transform="rotate(-18 -4 2)"/><ellipse cx="8" cy="-4" rx="6" ry="4.8"/><circle cx="5" cy="-8.5" r="2.4"/><circle cx="12" cy="-7.5" r="2.4"/><ellipse cx="1" cy="-6" rx="4" ry="2"/><ellipse cx="-13" cy="5" rx="4" ry="2.6"/><ellipse cx="-6" cy="7.5" rx="4" ry="2.4"/><circle cx="7" cy="-4" r="0.8" fill="#4a2a10"/><circle cx="11" cy="-3" r="0.8" fill="#4a2a10"/></g>
<g transform="translate(131.4 276) scale(0.9 0.68)" fill="#c8925a"><ellipse cx="-4" cy="2" rx="11" ry="5.5" transform="rotate(-18 -4 2)"/><ellipse cx="8" cy="-4" rx="6" ry="4.8"/><circle cx="5" cy="-8.5" r="2.4"/><circle cx="12" cy="-7.5" r="2.4"/><ellipse cx="1" cy="-6" rx="4" ry="2"/><ellipse cx="-13" cy="5" rx="4" ry="2.6"/><ellipse cx="-6" cy="7.5" rx="4" ry="2.4"/><circle cx="7" cy="-4" r="0.8" fill="#4a2a10"/><circle cx="11" cy="-3" r="0.8" fill="#4a2a10"/></g>
<g transform="translate(85 243) scale(0.9 0.68)" fill="#c8925a"><ellipse cx="-4" cy="2" rx="11" ry="5.5" transform="rotate(-18 -4 2)"/><ellipse cx="8" cy="-4" rx="6" ry="4.8"/><circle cx="5" cy="-8.5" r="2.4"/><circle cx="12" cy="-7.5" r="2.4"/><ellipse cx="1" cy="-6" rx="4" ry="2"/><ellipse cx="-13" cy="5" rx="4" ry="2.6"/><ellipse cx="-6" cy="7.5" rx="4" ry="2.4"/><circle cx="7" cy="-4" r="0.8" fill="#4a2a10"/><circle cx="11" cy="-3" r="0.8" fill="#4a2a10"/></g>
<g transform="translate(139.5 199) rotate(185) scale(1 0.8)"><g fill="#e07488"><ellipse cx="4" cy="-3.5" rx="6" ry="1.6" transform="rotate(-25 4 -3.5)"/><ellipse cx="4.5" cy="0" rx="6" ry="1.6"/><ellipse cx="4" cy="3.5" rx="6" ry="1.6" transform="rotate(25 4 3.5)"/></g><path d="M-2 -3 l-7 3 l7 3z" fill="#1a5a2a"/></g>
<g transform="translate(217.3 195.3) rotate(200) scale(1 0.8)"><g fill="#e07488"><ellipse cx="4" cy="-3.5" rx="6" ry="1.6" transform="rotate(-25 4 -3.5)"/><ellipse cx="4.5" cy="0" rx="6" ry="1.6"/><ellipse cx="4" cy="3.5" rx="6" ry="1.6" transform="rotate(25 4 3.5)"/></g><path d="M-2 -3 l-7 3 l7 3z" fill="#1a5a2a"/></g>
<g transform="translate(287.3 207) rotate(-15) scale(1 0.8)"><g fill="#e07488"><ellipse cx="4" cy="-3.5" rx="6" ry="1.6" transform="rotate(-25 4 -3.5)"/><ellipse cx="4.5" cy="0" rx="6" ry="1.6"/><ellipse cx="4" cy="3.5" rx="6" ry="1.6" transform="rotate(25 4 3.5)"/></g><path d="M-2 -3 l-7 3 l7 3z" fill="#1a5a2a"/></g>
<g transform="translate(316 234.2) rotate(0) scale(1 0.8)"><g fill="#e07488"><ellipse cx="4" cy="-3.5" rx="6" ry="1.6" transform="rotate(-25 4 -3.5)"/><ellipse cx="4.5" cy="0" rx="6" ry="1.6"/><ellipse cx="4" cy="3.5" rx="6" ry="1.6" transform="rotate(25 4 3.5)"/></g><path d="M-2 -3 l-7 3 l7 3z" fill="#1a5a2a"/></g>
<g transform="translate(285.4 269.2) rotate(25) scale(1 0.8)"><g fill="#e07488"><ellipse cx="4" cy="-3.5" rx="6" ry="1.6" transform="rotate(-25 4 -3.5)"/><ellipse cx="4.5" cy="0" rx="6" ry="1.6"/><ellipse cx="4" cy="3.5" rx="6" ry="1.6" transform="rotate(25 4 3.5)"/></g><path d="M-2 -3 l-7 3 l7 3z" fill="#1a5a2a"/></g>
<g transform="translate(182.3 284.8) rotate(95) scale(1 0.8)"><g fill="#e07488"><ellipse cx="4" cy="-3.5" rx="6" ry="1.6" transform="rotate(-25 4 -3.5)"/><ellipse cx="4.5" cy="0" rx="6" ry="1.6"/><ellipse cx="4" cy="3.5" rx="6" ry="1.6" transform="rotate(25 4 3.5)"/></g><path d="M-2 -3 l-7 3 l7 3z" fill="#1a5a2a"/></g>
<g transform="translate(98 263) rotate(160) scale(1 0.8)"><g fill="#e07488"><ellipse cx="4" cy="-3.5" rx="6" ry="1.6" transform="rotate(-25 4 -3.5)"/><ellipse cx="4.5" cy="0" rx="6" ry="1.6"/><ellipse cx="4" cy="3.5" rx="6" ry="1.6" transform="rotate(25 4 3.5)"/></g><path d="M-2 -3 l-7 3 l7 3z" fill="#1a5a2a"/></g>
<g transform="translate(88 224.5) rotate(180) scale(1 0.8)"><g fill="#e07488"><ellipse cx="4" cy="-3.5" rx="6" ry="1.6" transform="rotate(-25 4 -3.5)"/><ellipse cx="4.5" cy="0" rx="6" ry="1.6"/><ellipse cx="4" cy="3.5" rx="6" ry="1.6" transform="rotate(25 4 3.5)"/></g><path d="M-2 -3 l-7 3 l7 3z" fill="#1a5a2a"/></g>
<polygon points="60.5,222.6 128.5,192.3 212,188 306.4,203.7 352.1,235.8 308.4,281 178.8,301.4 67.9,271.8" fill="none" stroke="#2218a8" stroke-width="1.15" />
<line x1="5.5" y1="96" x2="5.5" y2="546" stroke="#101010" stroke-width="1.2"/>
</svg>
<!--/V3D-->
<div id="split" class="abs"></div>
<div id="view2d" class="abs"></div>
<!--V2D-->
<svg class="abs" style="left:406px;top:96px" width="387" height="450" viewBox="406 96 387 450">
<rect x="406" y="96" width="387" height="450" fill="#fff"/><line x1="791.5" y1="97" x2="791.5" y2="546" stroke="#f0eef4"/>
<line x1="425.5" y1="98" x2="425.5" y2="546" stroke="#8a8a8a" stroke-dasharray="4 4"/>
<line x1="772.5" y1="98" x2="772.5" y2="546" stroke="#8a8a8a" stroke-dasharray="4 4"/>
<text x="456.6" y="119.3" font-family="Liberation Serif" font-size="25" textLength="83" lengthAdjust="spacingAndGlyphs" fill="#000">Gift Box</text>
<rect x="692" y="118" width="66" height="428" fill="#fe95d3"/>
<path d="M692 118 L701.5 108.5 H748 L758 118" fill="none" stroke="#2a1a22" stroke-width="1.1"/>
<line x1="758" y1="118" x2="758" y2="546" stroke="#2a1a22" stroke-width="1.2"/>
<line x1="692" y1="118.0" x2="758" y2="118.0" stroke="#5a1a4a" stroke-dasharray="1.4 2.5" stroke-width="1.4"/>
<path d="M692 118.0 L682 128.0 V162.6 L692 172.6" fill="none" stroke="#2a1a22" stroke-width="1.1"/>
<line x1="692" y1="172.6" x2="758" y2="172.6" stroke="#5a1a4a" stroke-dasharray="1.4 2.5" stroke-width="1.4"/>
<path d="M692 172.6 L682 182.6 V217.2 L692 227.2" fill="none" stroke="#2a1a22" stroke-width="1.1"/>
<line x1="692" y1="227.2" x2="758" y2="227.2" stroke="#5a1a4a" stroke-dasharray="1.4 2.5" stroke-width="1.4"/>
<path d="M692 227.2 L682 237.2 V271.8 L692 281.8" fill="none" stroke="#2a1a22" stroke-width="1.1"/>
<line x1="692" y1="281.8" x2="758" y2="281.8" stroke="#5a1a4a" stroke-dasharray="1.4 2.5" stroke-width="1.4"/>
<path d="M692 281.8 L682 291.8 V326.4 L692 336.4" fill="none" stroke="#2a1a22" stroke-width="1.1"/>
<line x1="692" y1="336.4" x2="758" y2="336.4" stroke="#5a1a4a" stroke-dasharray="1.4 2.5" stroke-width="1.4"/>
<path d="M692 336.4 L682 346.4 V381.0 L692 391.0" fill="none" stroke="#2a1a22" stroke-width="1.1"/>
<line x1="692" y1="391.0" x2="758" y2="391.0" stroke="#5a1a4a" stroke-dasharray="1.4 2.5" stroke-width="1.4"/>
<path d="M692 391.0 L682 401.0 V435" fill="none" stroke="#2a1a22" stroke-width="1.1"/>
<line x1="692" y1="445.6" x2="758" y2="445.6" stroke="#5a1a4a" stroke-dasharray="1.4 2.5" stroke-width="1.4"/>
<line x1="692" y1="500.2" x2="758" y2="500.2" stroke="#5a1a4a" stroke-dasharray="1.4 2.5" stroke-width="1.4"/>
<path d="M692 500.2 L682 510.2 V546" fill="none" stroke="#2a1a22" stroke-width="1.1"/>
<line x1="692" y1="118" x2="692" y2="546" stroke="#2a0a20" stroke-dasharray="1.4 2.5" stroke-width="1.4"/>
<path d="M692 445 L652.6 406.8 H598.7 L560 445 V500.3 L598.7 538.4 H652.6 L692 500.3" fill="#fe95d3" stroke="#2a1a22" stroke-width="1.1"/>
<line x1="692" y1="445" x2="692" y2="500.3" stroke="#fe95d3" stroke-width="2"/>
<line x1="692" y1="445" x2="692" y2="500.3" stroke="#2a0a20" stroke-dasharray="1.4 2.5" stroke-width="1.4"/>
<polygon points="570.40,174.70 570.40,159.70 573.10,157.40 587.70,157.40" fill="#fdf2fb"/>
<polygon points="513.60,174.70 513.60,159.70 510.90,157.40 496.30,157.40" fill="#fdf2fb"/>
<polyline points="570.40,159.70 573.10,157.40 587.70,157.40" fill="none" stroke="#2a1a22" stroke-width="1.1"/>
<polyline points="513.60,159.70 510.90,157.40 496.30,157.40" fill="none" stroke="#2a1a22" stroke-width="1.1"/>
<polygon points="610.30,271.40 625.30,271.40 627.60,274.10 627.60,288.70" fill="#fdf2fb"/>
<polygon points="610.30,214.60 625.30,214.60 627.60,211.90 627.60,197.30" fill="#fdf2fb"/>
<polyline points="625.30,271.40 627.60,274.10 627.60,288.70" fill="none" stroke="#2a1a22" stroke-width="1.1"/>
<polyline points="625.30,214.60 627.60,211.90 627.60,197.30" fill="none" stroke="#2a1a22" stroke-width="1.1"/>
<polygon points="513.60,311.30 513.60,326.30 510.90,328.60 496.30,328.60" fill="#fdf2fb"/>
<polygon points="570.40,311.30 570.40,326.30 573.10,328.60 587.70,328.60" fill="#fdf2fb"/>
<polyline points="513.60,326.30 510.90,328.60 496.30,328.60" fill="none" stroke="#2a1a22" stroke-width="1.1"/>
<polyline points="570.40,326.30 573.10,328.60 587.70,328.60" fill="none" stroke="#2a1a22" stroke-width="1.1"/>
<polygon points="473.70,214.60 458.70,214.60 456.40,211.90 456.40,197.30" fill="#fdf2fb"/>
<polygon points="473.70,271.40 458.70,271.40 456.40,274.10 456.40,288.70" fill="#fdf2fb"/>
<polyline points="458.70,214.60 456.40,211.90 456.40,197.30" fill="none" stroke="#2a1a22" stroke-width="1.1"/>
<polyline points="458.70,271.40 456.40,274.10 456.40,288.70" fill="none" stroke="#2a1a22" stroke-width="1.1"/>
<polygon points="513.60,174.70 513.60,150.20 570.40,150.20 570.40,174.70" fill="#fbd9fb"/>
<polyline points="513.60,174.70 513.60,150.20 570.40,150.20 570.40,174.70" fill="none" stroke="#2a1a22" stroke-width="1.1"/>
<polygon points="570.21,174.62 587.54,157.30 627.70,197.46 610.38,214.79" fill="#fbd9fb"/>
<polyline points="587.54,157.30 627.70,197.46" fill="none" stroke="#2a1a22" stroke-width="1.1"/>
<polyline points="570.21,174.62 587.54,157.30" fill="none" stroke="#5a3c5a" stroke-width="1.3" stroke-dasharray="1.8 1.7"/>
<polyline points="627.70,197.46 610.38,214.79" fill="none" stroke="#5a3c5a" stroke-width="1.3" stroke-dasharray="1.8 1.7"/>
<polygon points="610.30,214.60 634.80,214.60 634.80,271.40 610.30,271.40" fill="#fbd9fb"/>
<polyline points="610.30,214.60 634.80,214.60 634.80,271.40 610.30,271.40" fill="none" stroke="#2a1a22" stroke-width="1.1"/>
<polygon points="610.38,271.21 627.70,288.54 587.54,328.70 570.21,311.38" fill="#fbd9fb"/>
<polyline points="627.70,288.54 587.54,328.70" fill="none" stroke="#2a1a22" stroke-width="1.1"/>
<polyline points="610.38,271.21 627.70,288.54" fill="none" stroke="#5a3c5a" stroke-width="1.3" stroke-dasharray="1.8 1.7"/>
<polyline points="587.54,328.70 570.21,311.38" fill="none" stroke="#5a3c5a" stroke-width="1.3" stroke-dasharray="1.8 1.7"/>
<polygon points="570.40,311.30 570.40,335.80 513.60,335.80 513.60,311.30" fill="#fbd9fb"/>
<polyline points="570.40,311.30 570.40,335.80 513.60,335.80 513.60,311.30" fill="none" stroke="#2a1a22" stroke-width="1.1"/>
<polygon points="513.79,311.38 496.46,328.70 456.30,288.54 473.62,271.21" fill="#fbd9fb"/>
<polyline points="496.46,328.70 456.30,288.54" fill="none" stroke="#2a1a22" stroke-width="1.1"/>
<polyline points="513.79,311.38 496.46,328.70" fill="none" stroke="#5a3c5a" stroke-width="1.3" stroke-dasharray="1.8 1.7"/>
<polyline points="456.30,288.54 473.62,271.21" fill="none" stroke="#5a3c5a" stroke-width="1.3" stroke-dasharray="1.8 1.7"/>
<polygon points="473.70,271.40 449.20,271.40 449.20,214.60 473.70,214.60" fill="#fbd9fb"/>
<polyline points="473.70,271.40 449.20,271.40 449.20,214.60 473.70,214.60" fill="none" stroke="#2a1a22" stroke-width="1.1"/>
<polygon points="473.62,214.79 456.30,197.46 496.46,157.30 513.79,174.62" fill="#fbd9fb"/>
<polyline points="456.30,197.46 496.46,157.30" fill="none" stroke="#2a1a22" stroke-width="1.1"/>
<polyline points="473.62,214.79 456.30,197.46" fill="none" stroke="#5a3c5a" stroke-width="1.3" stroke-dasharray="1.8 1.7"/>
<polyline points="496.46,157.30 513.79,174.62" fill="none" stroke="#5a3c5a" stroke-width="1.3" stroke-dasharray="1.8 1.7"/>
<polygon points="513.60,174.70 570.21,174.62 610.30,214.60 610.38,271.21 570.40,311.30 513.79,311.38 473.70,271.40 473.62,214.79" fill="#fad1f5"/>
<path d="M517.6 155.1 L522.5 158.3 L527.4 155.1 L532.2 158.3 L537.1 155.1 L542.0 158.3 L546.9 155.1 L551.8 158.3 L556.6 155.1 L561.5 158.3 L566.4 155.1 " fill="none" stroke="#2f8a3a" stroke-width="1.1"/>
<circle cx="527.4" cy="155.7" r="1.6" fill="#f090a8"/>
<circle cx="537.1" cy="155.7" r="1.6" fill="#f090a8"/>
<circle cx="546.9" cy="155.7" r="1.6" fill="#f090a8"/>
<circle cx="556.6" cy="155.7" r="1.6" fill="#f090a8"/>
<circle cx="517.1" cy="156.7" r="1.3" fill="none" stroke="#2f8a3a" stroke-width="1"/>
<circle cx="566.9" cy="156.7" r="1.3" fill="none" stroke="#2f8a3a" stroke-width="1"/>
<path d="M586.9 163.6 L588.1 169.3 L593.8 170.5 L595.0 176.2 L600.7 177.4 L601.9 183.1 L607.6 184.3 L608.8 190.0 L614.5 191.2 L615.7 196.9 L621.4 198.1 " fill="none" stroke="#2f8a3a" stroke-width="1.1"/>
<circle cx="593.4" cy="170.9" r="1.6" fill="#f090a8"/>
<circle cx="600.3" cy="177.8" r="1.6" fill="#f090a8"/>
<circle cx="607.2" cy="184.7" r="1.6" fill="#f090a8"/>
<circle cx="614.1" cy="191.6" r="1.6" fill="#f090a8"/>
<circle cx="585.4" cy="164.4" r="1.3" fill="none" stroke="#2f8a3a" stroke-width="1"/>
<circle cx="620.6" cy="199.6" r="1.3" fill="none" stroke="#2f8a3a" stroke-width="1"/>
<path d="M629.9 218.6 L626.7 223.5 L629.9 228.4 L626.7 233.2 L629.9 238.1 L626.7 243.0 L629.9 247.9 L626.7 252.8 L629.9 257.6 L626.7 262.5 L629.9 267.4 " fill="none" stroke="#2f8a3a" stroke-width="1.1"/>
<circle cx="629.3" cy="228.4" r="1.6" fill="#f090a8"/>
<circle cx="629.3" cy="238.1" r="1.6" fill="#f090a8"/>
<circle cx="629.3" cy="247.9" r="1.6" fill="#f090a8"/>
<circle cx="629.3" cy="257.6" r="1.6" fill="#f090a8"/>
<circle cx="628.3" cy="218.1" r="1.3" fill="none" stroke="#2f8a3a" stroke-width="1"/>
<circle cx="628.3" cy="267.9" r="1.3" fill="none" stroke="#2f8a3a" stroke-width="1"/>
<path d="M621.4 287.9 L615.7 289.1 L614.5 294.8 L608.8 296.0 L607.6 301.7 L601.9 302.9 L600.7 308.6 L595.0 309.8 L593.8 315.5 L588.1 316.7 L586.9 322.4 " fill="none" stroke="#2f8a3a" stroke-width="1.1"/>
<circle cx="614.1" cy="294.4" r="1.6" fill="#f090a8"/>
<circle cx="607.2" cy="301.3" r="1.6" fill="#f090a8"/>
<circle cx="600.3" cy="308.2" r="1.6" fill="#f090a8"/>
<circle cx="593.4" cy="315.1" r="1.6" fill="#f090a8"/>
<circle cx="620.6" cy="286.4" r="1.3" fill="none" stroke="#2f8a3a" stroke-width="1"/>
<circle cx="585.4" cy="321.6" r="1.3" fill="none" stroke="#2f8a3a" stroke-width="1"/>
<path d="M566.4 330.9 L561.5 327.7 L556.6 330.9 L551.8 327.7 L546.9 330.9 L542.0 327.7 L537.1 330.9 L532.2 327.7 L527.4 330.9 L522.5 327.7 L517.6 330.9 " fill="none" stroke="#2f8a3a" stroke-width="1.1"/>
<circle cx="556.6" cy="330.3" r="1.6" fill="#f090a8"/>
<circle cx="546.9" cy="330.3" r="1.6" fill="#f090a8"/>
<circle cx="537.1" cy="330.3" r="1.6" fill="#f090a8"/>
<circle cx="527.4" cy="330.3" r="1.6" fill="#f090a8"/>
<circle cx="566.9" cy="329.3" r="1.3" fill="none" stroke="#2f8a3a" stroke-width="1"/>
<circle cx="517.1" cy="329.3" r="1.3" fill="none" stroke="#2f8a3a" stroke-width="1"/>
<path d="M497.1 322.4 L495.9 316.7 L490.2 315.5 L489.0 309.8 L483.3 308.6 L482.1 302.9 L476.4 301.7 L475.2 296.0 L469.5 294.8 L468.3 289.1 L462.6 287.9 " fill="none" stroke="#2f8a3a" stroke-width="1.1"/>
<circle cx="490.6" cy="315.1" r="1.6" fill="#f090a8"/>
<circle cx="483.7" cy="308.2" r="1.6" fill="#f090a8"/>
<circle cx="476.8" cy="301.3" r="1.6" fill="#f090a8"/>
<circle cx="469.9" cy="294.4" r="1.6" fill="#f090a8"/>
<circle cx="498.6" cy="321.6" r="1.3" fill="none" stroke="#2f8a3a" stroke-width="1"/>
<circle cx="463.4" cy="286.4" r="1.3" fill="none" stroke="#2f8a3a" stroke-width="1"/>
<path d="M454.1 267.4 L457.3 262.5 L454.1 257.6 L457.3 252.8 L454.1 247.9 L457.3 243.0 L454.1 238.1 L457.3 233.2 L454.1 228.4 L457.3 223.5 L454.1 218.6 " fill="none" stroke="#2f8a3a" stroke-width="1.1"/>
<circle cx="454.7" cy="257.6" r="1.6" fill="#f090a8"/>
<circle cx="454.7" cy="247.9" r="1.6" fill="#f090a8"/>
<circle cx="454.7" cy="238.1" r="1.6" fill="#f090a8"/>
<circle cx="454.7" cy="228.4" r="1.6" fill="#f090a8"/>
<circle cx="455.7" cy="267.9" r="1.3" fill="none" stroke="#2f8a3a" stroke-width="1"/>
<circle cx="455.7" cy="218.1" r="1.3" fill="none" stroke="#2f8a3a" stroke-width="1"/>
<path d="M462.6 198.1 L468.3 196.9 L469.5 191.2 L475.2 190.0 L476.4 184.3 L482.1 183.1 L483.3 177.4 L489.0 176.2 L490.2 170.5 L495.9 169.3 L497.1 163.6 " fill="none" stroke="#2f8a3a" stroke-width="1.1"/>
<circle cx="469.9" cy="191.6" r="1.6" fill="#f090a8"/>
<circle cx="476.8" cy="184.7" r="1.6" fill="#f090a8"/>
<circle cx="483.7" cy="177.8" r="1.6" fill="#f090a8"/>
<circle cx="490.6" cy="170.9" r="1.6" fill="#f090a8"/>
<circle cx="463.4" cy="199.6" r="1.3" fill="none" stroke="#2f8a3a" stroke-width="1"/>
<circle cx="498.6" cy="164.4" r="1.3" fill="none" stroke="#2f8a3a" stroke-width="1"/>
<polygon points="513.60,174.70 570.21,174.62 610.30,214.60 610.38,271.21 570.40,311.30 513.79,311.38 473.70,271.40 473.62,214.79" fill="none" stroke="#5a3c5a" stroke-width="1.6" stroke-dasharray="1.8 1.7"/>
<circle cx="542.0" cy="242.0" r="46" fill="#fff"/>
<circle cx="587.00" cy="242.00" r="1" fill="#f4e4f0"/>
<circle cx="586.32" cy="249.81" r="1" fill="#f4e4f0"/>
<circle cx="584.29" cy="257.39" r="1" fill="#f4e4f0"/>
<circle cx="580.97" cy="264.50" r="1" fill="#f4e4f0"/>
<circle cx="576.47" cy="270.93" r="1" fill="#f4e4f0"/>
<circle cx="570.93" cy="276.47" r="1" fill="#f4e4f0"/>
<circle cx="564.50" cy="280.97" r="1" fill="#f4e4f0"/>
<circle cx="557.39" cy="284.29" r="1" fill="#f4e4f0"/>
<circle cx="549.81" cy="286.32" r="1" fill="#f4e4f0"/>
<circle cx="542.00" cy="287.00" r="1" fill="#f4e4f0"/>
<circle cx="534.19" cy="286.32" r="1" fill="#f4e4f0"/>
<circle cx="526.61" cy="284.29" r="1" fill="#f4e4f0"/>
<circle cx="519.50" cy="280.97" r="1" fill="#f4e4f0"/>
<circle cx="513.07" cy="276.47" r="1" fill="#f4e4f0"/>
<circle cx="507.53" cy="270.93" r="1" fill="#f4e4f0"/>
<circle cx="503.03" cy="264.50" r="1" fill="#f4e4f0"/>
<circle cx="499.71" cy="257.39" r="1" fill="#f4e4f0"/>
<circle cx="497.68" cy="249.81" r="1" fill="#f4e4f0"/>
<circle cx="497.00" cy="242.00" r="1" fill="#f4e4f0"/>
<circle cx="497.68" cy="234.19" r="1" fill="#f4e4f0"/>
<circle cx="499.71" cy="226.61" r="1" fill="#f4e4f0"/>
<circle cx="503.03" cy="219.50" r="1" fill="#f4e4f0"/>
<circle cx="507.53" cy="213.07" r="1" fill="#f4e4f0"/>
<circle cx="513.07" cy="207.53" r="1" fill="#f4e4f0"/>
<circle cx="519.50" cy="203.03" r="1" fill="#f4e4f0"/>
<circle cx="526.61" cy="199.71" r="1" fill="#f4e4f0"/>
<circle cx="534.19" cy="197.68" r="1" fill="#f4e4f0"/>
<circle cx="542.00" cy="197.00" r="1" fill="#f4e4f0"/>
<circle cx="549.81" cy="197.68" r="1" fill="#f4e4f0"/>
<circle cx="557.39" cy="199.71" r="1" fill="#f4e4f0"/>
<circle cx="564.50" cy="203.03" r="1" fill="#f4e4f0"/>
<circle cx="570.93" cy="207.53" r="1" fill="#f4e4f0"/>
<circle cx="576.47" cy="213.07" r="1" fill="#f4e4f0"/>
<circle cx="580.97" cy="219.50" r="1" fill="#f4e4f0"/>
<circle cx="584.29" cy="226.61" r="1" fill="#f4e4f0"/>
<circle cx="586.32" cy="234.19" r="1" fill="#f4e4f0"/>
<ellipse cx="542.00" cy="207.50" rx="5.4" ry="3.3" transform="rotate(-90.0 542.00 207.50)" fill="#8cc43c"/>
<circle cx="551.57" cy="218.90" r="3.8" fill="#f7cdee"/>
<ellipse cx="566.40" cy="217.60" rx="5.4" ry="3.3" transform="rotate(-45.0 566.40 217.60)" fill="#8cc43c"/>
<circle cx="565.10" cy="232.43" r="3.8" fill="#f7cdee"/>
<ellipse cx="576.50" cy="242.00" rx="5.4" ry="3.3" transform="rotate(0.0 576.50 242.00)" fill="#8cc43c"/>
<circle cx="565.10" cy="251.57" r="3.8" fill="#f7cdee"/>
<ellipse cx="566.40" cy="266.40" rx="5.4" ry="3.3" transform="rotate(45.0 566.40 266.40)" fill="#8cc43c"/>
<circle cx="551.57" cy="265.10" r="3.8" fill="#f7cdee"/>
<ellipse cx="542.00" cy="276.50" rx="5.4" ry="3.3" transform="rotate(90.0 542.00 276.50)" fill="#8cc43c"/>
<circle cx="532.43" cy="265.10" r="3.8" fill="#f7cdee"/>
<ellipse cx="517.60" cy="266.40" rx="5.4" ry="3.3" transform="rotate(135.0 517.60 266.40)" fill="#8cc43c"/>
<circle cx="518.90" cy="251.57" r="3.8" fill="#f7cdee"/>
<ellipse cx="507.50" cy="242.00" rx="5.4" ry="3.3" transform="rotate(180.0 507.50 242.00)" fill="#8cc43c"/>
<circle cx="518.90" cy="232.43" r="3.8" fill="#f7cdee"/>
<ellipse cx="517.60" cy="217.60" rx="5.4" ry="3.3" transform="rotate(225.0 517.60 217.60)" fill="#8cc43c"/>
<circle cx="532.43" cy="218.90" r="3.8" fill="#f7cdee"/>
<g transform="translate(542.00 185.00) rotate(0.0) scale(0.85)" fill="#e8ac64"><ellipse cx="0" cy="2.5" rx="4.5" ry="5.5"/><circle cx="0" cy="-4" r="4"/><circle cx="-3.3" cy="-7" r="1.6"/><circle cx="3.3" cy="-7" r="1.6"/><ellipse cx="-4.5" cy="1" rx="1.8" ry="3"/><ellipse cx="4.5" cy="1" rx="1.8" ry="3"/><ellipse cx="-2.5" cy="7.5" rx="2.2" ry="1.8"/><ellipse cx="2.5" cy="7.5" rx="2.2" ry="1.8"/></g>
<g transform="translate(563.81 189.34) rotate(22.5)"><path d="M-3 -5 L0 2 L3 -5 M0 -6 L0 2" stroke="#ea7890" stroke-width="2" fill="none"/><path d="M-1.5 2 L1.5 2 L0 6z" fill="#2a6a2a"/></g>
<g transform="translate(582.31 201.69) rotate(45.0) scale(0.85)" fill="#e8ac64"><ellipse cx="0" cy="2.5" rx="4.5" ry="5.5"/><circle cx="0" cy="-4" r="4"/><circle cx="-3.3" cy="-7" r="1.6"/><circle cx="3.3" cy="-7" r="1.6"/><ellipse cx="-4.5" cy="1" rx="1.8" ry="3"/><ellipse cx="4.5" cy="1" rx="1.8" ry="3"/><ellipse cx="-2.5" cy="7.5" rx="2.2" ry="1.8"/><ellipse cx="2.5" cy="7.5" rx="2.2" ry="1.8"/></g>
<g transform="translate(594.66 220.19) rotate(67.5)"><path d="M-3 -5 L0 2 L3 -5 M0 -6 L0 2" stroke="#ea7890" stroke-width="2" fill="none"/><path d="M-1.5 2 L1.5 2 L0 6z" fill="#2a6a2a"/></g>
<g transform="translate(599.00 242.00) rotate(90.0) scale(0.85)" fill="#e8ac64"><ellipse cx="0" cy="2.5" rx="4.5" ry="5.5"/><circle cx="0" cy="-4" r="4"/><circle cx="-3.3" cy="-7" r="1.6"/><circle cx="3.3" cy="-7" r="1.6"/><ellipse cx="-4.5" cy="1" rx="1.8" ry="3"/><ellipse cx="4.5" cy="1" rx="1.8" ry="3"/><ellipse cx="-2.5" cy="7.5" rx="2.2" ry="1.8"/><ellipse cx="2.5" cy="7.5" rx="2.2" ry="1.8"/></g>
<g transform="translate(594.66 263.81) rotate(112.5)"><path d="M-3 -5 L0 2 L3 -5 M0 -6 L0 2" stroke="#ea7890" stroke-width="2" fill="none"/><path d="M-1.5 2 L1.5 2 L0 6z" fill="#2a6a2a"/></g>
<g transform="translate(582.31 282.31) rotate(135.0) scale(0.85)" fill="#e8ac64"><ellipse cx="0" cy="2.5" rx="4.5" ry="5.5"/><circle cx="0" cy="-4" r="4"/><circle cx="-3.3" cy="-7" r="1.6"/><circle cx="3.3" cy="-7" r="1.6"/><ellipse cx="-4.5" cy="1" rx="1.8" ry="3"/><ellipse cx="4.5" cy="1" rx="1.8" ry="3"/><ellipse cx="-2.5" cy="7.5" rx="2.2" ry="1.8"/><ellipse cx="2.5" cy="7.5" rx="2.2" ry="1.8"/></g>
<g transform="translate(563.81 294.66) rotate(157.5)"><path d="M-3 -5 L0 2 L3 -5 M0 -6 L0 2" stroke="#ea7890" stroke-width="2" fill="none"/><path d="M-1.5 2 L1.5 2 L0 6z" fill="#2a6a2a"/></g>
<g transform="translate(542.00 299.00) rotate(180.0) scale(0.85)" fill="#e8ac64"><ellipse cx="0" cy="2.5" rx="4.5" ry="5.5"/><circle cx="0" cy="-4" r="4"/><circle cx="-3.3" cy="-7" r="1.6"/><circle cx="3.3" cy="-7" r="1.6"/><ellipse cx="-4.5" cy="1" rx="1.8" ry="3"/><ellipse cx="4.5" cy="1" rx="1.8" ry="3"/><ellipse cx="-2.5" cy="7.5" rx="2.2" ry="1.8"/><ellipse cx="2.5" cy="7.5" rx="2.2" ry="1.8"/></g>
<g transform="translate(520.19 294.66) rotate(202.5)"><path d="M-3 -5 L0 2 L3 -5 M0 -6 L0 2" stroke="#ea7890" stroke-width="2" fill="none"/><path d="M-1.5 2 L1.5 2 L0 6z" fill="#2a6a2a"/></g>
<g transform="translate(501.69 282.31) rotate(225.0) scale(0.85)" fill="#e8ac64"><ellipse cx="0" cy="2.5" rx="4.5" ry="5.5"/><circle cx="0" cy="-4" r="4"/><circle cx="-3.3" cy="-7" r="1.6"/><circle cx="3.3" cy="-7" r="1.6"/><ellipse cx="-4.5" cy="1" rx="1.8" ry="3"/><ellipse cx="4.5" cy="1" rx="1.8" ry="3"/><ellipse cx="-2.5" cy="7.5" rx="2.2" ry="1.8"/><ellipse cx="2.5" cy="7.5" rx="2.2" ry="1.8"/></g>
<g transform="translate(489.34 263.81) rotate(247.5)"><path d="M-3 -5 L0 2 L3 -5 M0 -6 L0 2" stroke="#ea7890" stroke-width="2" fill="none"/><path d="M-1.5 2 L1.5 2 L0 6z" fill="#2a6a2a"/></g>
<g transform="translate(485.00 242.00) rotate(270.0) scale(0.85)" fill="#e8ac64"><ellipse cx="0" cy="2.5" rx="4.5" ry="5.5"/><circle cx="0" cy="-4" r="4"/><circle cx="-3.3" cy="-7" r="1.6"/><circle cx="3.3" cy="-7" r="1.6"/><ellipse cx="-4.5" cy="1" rx="1.8" ry="3"/><ellipse cx="4.5" cy="1" rx="1.8" ry="3"/><ellipse cx="-2.5" cy="7.5" rx="2.2" ry="1.8"/><ellipse cx="2.5" cy="7.5" rx="2.2" ry="1.8"/></g>
<g transform="translate(489.34 220.19) rotate(292.5)"><path d="M-3 -5 L0 2 L3 -5 M0 -6 L0 2" stroke="#ea7890" stroke-width="2" fill="none"/><path d="M-1.5 2 L1.5 2 L0 6z" fill="#2a6a2a"/></g>
<g transform="translate(501.69 201.69) rotate(315.0) scale(0.85)" fill="#e8ac64"><ellipse cx="0" cy="2.5" rx="4.5" ry="5.5"/><circle cx="0" cy="-4" r="4"/><circle cx="-3.3" cy="-7" r="1.6"/><circle cx="3.3" cy="-7" r="1.6"/><ellipse cx="-4.5" cy="1" rx="1.8" ry="3"/><ellipse cx="4.5" cy="1" rx="1.8" ry="3"/><ellipse cx="-2.5" cy="7.5" rx="2.2" ry="1.8"/><ellipse cx="2.5" cy="7.5" rx="2.2" ry="1.8"/></g>
<g transform="translate(520.19 189.34) rotate(337.5)"><path d="M-3 -5 L0 2 L3 -5 M0 -6 L0 2" stroke="#ea7890" stroke-width="2" fill="none"/><path d="M-1.5 2 L1.5 2 L0 6z" fill="#2a6a2a"/></g>
<line x1="406" y1="96.5" x2="793" y2="96.5" stroke="#101010" stroke-width="1.6"/>
<line x1="406.8" y1="96" x2="406.8" y2="546" stroke="#101010" stroke-width="1.6"/>
</svg>
<!--/V2D-->
<div id="status" class="abs"></div>
<div class="abs st" style="left:6px;transform:scaleX(.938)">2D [Select/Move] L [Pan] R or Wheel Drag [Zoom] Shift+R or Wheel</div>
<div class="abs st" style="left:389px;transform:scaleX(.922)">Assembled size(mm): H54 W71 D71 / Parts 2</div>
<svg class="abs" style="left:4px;top:4px" width="22" height="22" viewBox="4 4 22 22">
<defs><radialGradient id="glb" cx="0.35" cy="0.7" r="0.8"><stop offset="0" stop-color="#d8f4ff"/><stop offset="0.45" stop-color="#3a9ae8"/><stop offset="1" stop-color="#1040a0"/></radialGradient></defs>
<circle cx="13.5" cy="14" r="7" fill="url(#glb)"/>
<path d="M9 10 q4 2 6 -2 M11 15 q4 -1 7 1" stroke="#1a4aa8" stroke-width="1.2" fill="none"/>
<path d="M16 16 l3 5 M19 16 l-3 5" stroke="#e8d040" stroke-width="1.2"/>
</svg>
<div class="abs" style="will-change:transform;padding-right:3px;left:719px;top:549px;font-size:12px;font-weight:bold;color:#8a8a8a;transform:scaleX(.98);transform-origin:0 0;white-space:nowrap">Kopona.NET</div>
<svg class="abs" style="left:780px;top:552px" width="12" height="13" viewBox="780 552 12 13"><g fill="#b8b8b8"><rect x="788" y="556" width="2" height="2"/><rect x="785" y="559" width="2" height="2"/><rect x="788" y="559" width="2" height="2"/><rect x="782" y="562" width="2" height="2"/><rect x="785" y="562" width="2" height="2"/><rect x="788" y="562" width="2" height="2"/></g></svg>
</body></html>
